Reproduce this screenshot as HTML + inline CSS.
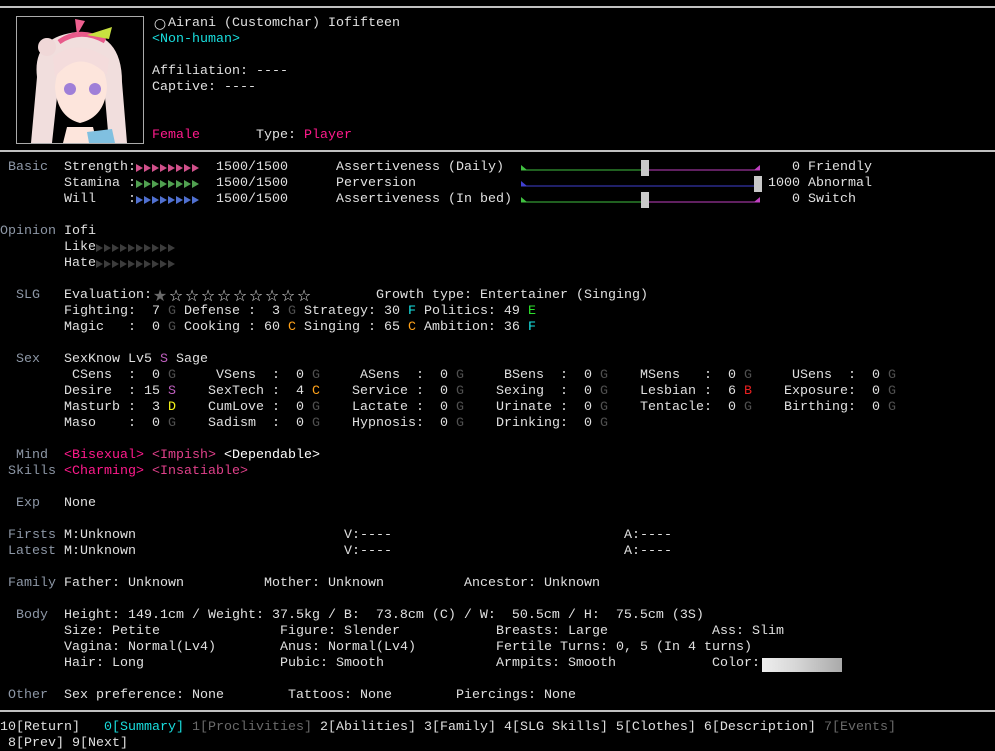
<!DOCTYPE html>
<html><head><meta charset="utf-8"><style>
html,body{margin:0;padding:0;background:#000;width:995px;height:751px;overflow:hidden}
body{position:relative;font-family:"Liberation Mono","Noto Sans CJK JP",monospace;font-size:13.33px;line-height:16px;color:#e0e0e0}
.t{position:absolute;white-space:pre;height:16px}
.l{color:#8d97a6}
.g{color:#505050}.F{color:#19e6e6}.E{color:#2de02d}.C{color:#ffa21a}.S{color:#c060c0}.D{color:#f5f51a}.B{color:#e82020}
.pk{color:#ff1a8c}.cy{color:#19dede}.mg{color:#e0408a}.gr{color:#6a6a6a}
.hr{position:absolute;left:0;width:995px;height:2px;background:#c0c0c0}
.st{display:inline-block;width:16px;text-align:center;font-size:16px;font-family:"DejaVu Sans",sans-serif;vertical-align:top;line-height:16px}
</style></head><body>
<div class="hr" style="top:6px"></div>
<div style="position:absolute;left:16px;top:16px;width:126px;height:126px;border:1px solid #aaa;background:#000;overflow:hidden">
<svg width="126" height="126" viewBox="0 0 126 126">
<path d="M20 60 Q15 20 60 15 Q105 15 105 65 L110 126 L92 126 L88 80 L40 80 L35 126 L14 126 Z" fill="#f1dedd"/>
<circle cx="30" cy="30" r="9" fill="#f0d8d8"/>
<path d="M38 70 Q40 40 63 38 Q88 40 90 70 Q88 100 63 106 Q40 100 38 70 Z" fill="#fde5dc"/>
<path d="M36 40 Q60 20 92 42 L90 58 Q62 30 38 60 Z" fill="#f4dcdc"/>
<ellipse cx="53" cy="72" rx="6" ry="6" fill="#9f7fd8"/><ellipse cx="78" cy="72" rx="6" ry="6" fill="#9f7fd8"/>
<path d="M42 25 Q63 10 88 24" stroke="#e85a8a" stroke-width="5" fill="none"/>
<path d="M60 18 L58 2 L68 4 Z" fill="#ee6090"/>
<path d="M70 18 L95 10 L92 22 Z" fill="#c8e040"/>
<path d="M50 110 L76 110 L80 126 L46 126 Z" fill="#fde5dc"/>
<path d="M70 115 L95 112 L98 126 L72 126 Z" fill="#80c0e0"/>
</svg></div>
<div class="t" style="left:152px;top:16px"><span class="st" style="font-size:14px">○</span>Airani (Customchar) Iofifteen</div>
<div class="t cy" style="left:152px;top:32px">&lt;Non-human&gt;</div>
<div class="t" style="left:152px;top:64px">Affiliation: ----</div>
<div class="t" style="left:152px;top:80px">Captive: ----</div>
<div class="t pk" style="left:152px;top:128px">Female</div>
<div class="t" style="left:256px;top:128px">Type: <span class="pk">Player</span></div>
<div class="hr" style="top:150px"></div>

<div class="t l" style="left:8px;top:160px">Basic</div>
<div class="t" style="left:64px;top:160px">Strength:</div>
<div class="t" style="left:64px;top:176px">Stamina :</div>
<div class="t" style="left:64px;top:192px">Will    :</div>
<svg style="position:absolute;left:136px;top:160px" width="70" height="48">
<g id="r1" fill="#d0508a"><path d="M0 4L7 8L0 12Z"/><path d="M8 4L15 8L8 12Z"/><path d="M16 4L23 8L16 12Z"/><path d="M24 4L31 8L24 12Z"/><path d="M32 4L39 8L32 12Z"/><path d="M40 4L47 8L40 12Z"/><path d="M48 4L55 8L48 12Z"/><path d="M56 4L63 8L56 12Z"/></g>
<g transform="translate(0,32)" fill="#5070d0"><path d="M0 4L7 8L0 12Z"/><path d="M8 4L15 8L8 12Z"/><path d="M16 4L23 8L16 12Z"/><path d="M24 4L31 8L24 12Z"/><path d="M32 4L39 8L32 12Z"/><path d="M40 4L47 8L40 12Z"/><path d="M48 4L55 8L48 12Z"/><path d="M56 4L63 8L56 12Z"/></g>
<g transform="translate(0,16)" fill="#50a050"><path d="M0 4L7 8L0 12Z"/><path d="M8 4L15 8L8 12Z"/><path d="M16 4L23 8L16 12Z"/><path d="M24 4L31 8L24 12Z"/><path d="M32 4L39 8L32 12Z"/><path d="M40 4L47 8L40 12Z"/><path d="M48 4L55 8L48 12Z"/><path d="M56 4L63 8L56 12Z"/></g>
</svg>
<div class="t" style="left:216px;top:160px">1500/1500</div>
<div class="t" style="left:216px;top:176px">1500/1500</div>
<div class="t" style="left:216px;top:192px">1500/1500</div>
<div class="t" style="left:336px;top:160px">Assertiveness (Daily)</div>
<div class="t" style="left:336px;top:176px">Perversion</div>
<div class="t" style="left:336px;top:192px">Assertiveness (In bed)</div>
<svg style="position:absolute;left:518px;top:158px" width="250" height="52">
<line x1="3" y1="12" x2="126" y2="12" stroke="#40c040"/><line x1="130" y1="12" x2="242" y2="12" stroke="#c040c0"/>
<path d="M3 7L3 12L9 12Z" fill="#40c040"/><path d="M242 7L242 12L236 12Z" fill="#c040c0"/>
<rect x="123" y="2" width="8" height="16" fill="#c8c8c8"/>
<line x1="3" y1="28" x2="240" y2="28" stroke="#4040d0"/><path d="M3 23L3 28L9 28Z" fill="#4040d0"/>
<rect x="236" y="18" width="8" height="16" fill="#c8c8c8"/>
<line x1="3" y1="44" x2="126" y2="44" stroke="#40c040"/><line x1="130" y1="44" x2="242" y2="44" stroke="#c040c0"/>
<path d="M3 39L3 44L9 44Z" fill="#40c040"/><path d="M242 39L242 44L236 44Z" fill="#c040c0"/>
<rect x="123" y="34" width="8" height="16" fill="#c8c8c8"/>
</svg>
<div class="t" style="left:792px;top:160px">0 Friendly</div>
<div class="t" style="left:768px;top:176px">1000 Abnormal</div>
<div class="t" style="left:792px;top:192px">0 Switch</div>

<div class="t l" style="left:0px;top:224px">Opinion</div>
<div class="t" style="left:64px;top:224px">Iofi</div>
<div class="t" style="left:64px;top:240px">Like</div>
<div class="t" style="left:64px;top:256px">Hate</div>
<svg style="position:absolute;left:96px;top:240px" width="84" height="32" fill="#3c3c3c">
<g id="o"><path d="M0 4L7 8L0 12Z"/><path d="M8 4L15 8L8 12Z"/><path d="M16 4L23 8L16 12Z"/><path d="M24 4L31 8L24 12Z"/><path d="M32 4L39 8L32 12Z"/><path d="M40 4L47 8L40 12Z"/><path d="M48 4L55 8L48 12Z"/><path d="M56 4L63 8L56 12Z"/><path d="M64 4L71 8L64 12Z"/><path d="M72 4L79 8L72 12Z"/></g>
<use href="#o" y="16"/></svg>

<div class="t l" style="left:16px;top:288px">SLG</div>
<div class="t" style="left:64px;top:288px">Evaluation:<span class="st" style="color:#6a6a6a">★</span><span class="st">☆</span><span class="st">☆</span><span class="st">☆</span><span class="st">☆</span><span class="st">☆</span><span class="st">☆</span><span class="st">☆</span><span class="st">☆</span><span class="st">☆</span></div>
<div class="t" style="left:376px;top:288px">Growth type: Entertainer (Singing)</div>
<div class="t" style="left:64px;top:304px">Fighting:  7 <span class="g">G</span> Defense :  3 <span class="g">G</span> Strategy: 30 <span class="F">F</span> Politics: 49 <span class="E">E</span></div>
<div class="t" style="left:64px;top:320px">Magic   :  0 <span class="g">G</span> Cooking : 60 <span class="C">C</span> Singing : 65 <span class="C">C</span> Ambition: 36 <span class="F">F</span></div>

<div class="t l" style="left:16px;top:352px">Sex</div>
<div class="t" style="left:64px;top:352px">SexKnow Lv5 <span class="S">S</span> Sage</div>
<div class="t" style="left:64px;top:368px"> CSens  :  0 <span class="g">G</span></div>
<div class="t" style="left:64px;top:384px">Desire  : 15 <span class="S">S</span></div>
<div class="t" style="left:64px;top:400px">Masturb :  3 <span class="D">D</span></div>
<div class="t" style="left:64px;top:416px">Maso    :  0 <span class="g">G</span></div>
<div class="t" style="left:208px;top:368px"> VSens  :  0 <span class="g">G</span></div>
<div class="t" style="left:208px;top:384px">SexTech :  4 <span class="C">C</span></div>
<div class="t" style="left:208px;top:400px">CumLove :  0 <span class="g">G</span></div>
<div class="t" style="left:208px;top:416px">Sadism  :  0 <span class="g">G</span></div>
<div class="t" style="left:352px;top:368px"> ASens  :  0 <span class="g">G</span></div>
<div class="t" style="left:352px;top:384px">Service :  0 <span class="g">G</span></div>
<div class="t" style="left:352px;top:400px">Lactate :  0 <span class="g">G</span></div>
<div class="t" style="left:352px;top:416px">Hypnosis:  0 <span class="g">G</span></div>
<div class="t" style="left:496px;top:368px"> BSens  :  0 <span class="g">G</span></div>
<div class="t" style="left:496px;top:384px">Sexing  :  0 <span class="g">G</span></div>
<div class="t" style="left:496px;top:400px">Urinate :  0 <span class="g">G</span></div>
<div class="t" style="left:496px;top:416px">Drinking:  0 <span class="g">G</span></div>
<div class="t" style="left:640px;top:368px">MSens   :  0 <span class="g">G</span></div>
<div class="t" style="left:640px;top:384px">Lesbian :  6 <span class="B">B</span></div>
<div class="t" style="left:640px;top:400px">Tentacle:  0 <span class="g">G</span></div>
<div class="t" style="left:784px;top:368px"> USens  :  0 <span class="g">G</span></div>
<div class="t" style="left:784px;top:384px">Exposure:  0 <span class="g">G</span></div>
<div class="t" style="left:784px;top:400px">Birthing:  0 <span class="g">G</span></div>

<div class="t l" style="left:16px;top:448px">Mind</div>
<div class="t l" style="left:8px;top:464px">Skills</div>
<div class="t pk" style="left:64px;top:448px">&lt;Bisexual&gt;</div>
<div class="t mg" style="left:152px;top:448px">&lt;Impish&gt;</div>
<div class="t" style="left:224px;top:448px;color:#fff">&lt;Dependable&gt;</div>
<div class="t pk" style="left:64px;top:464px">&lt;Charming&gt;</div>
<div class="t mg" style="left:152px;top:464px">&lt;Insatiable&gt;</div>

<div class="t l" style="left:16px;top:496px">Exp</div>
<div class="t" style="left:64px;top:496px">None</div>

<div class="t l" style="left:8px;top:528px">Firsts</div>
<div class="t l" style="left:8px;top:544px">Latest</div>
<div class="t" style="left:64px;top:528px">M:Unknown</div>
<div class="t" style="left:64px;top:544px">M:Unknown</div>
<div class="t" style="left:344px;top:528px">V:----</div>
<div class="t" style="left:344px;top:544px">V:----</div>
<div class="t" style="left:624px;top:528px">A:----</div>
<div class="t" style="left:624px;top:544px">A:----</div>

<div class="t l" style="left:8px;top:576px">Family</div>
<div class="t" style="left:64px;top:576px">Father: Unknown</div>
<div class="t" style="left:264px;top:576px">Mother: Unknown</div>
<div class="t" style="left:464px;top:576px">Ancestor: Unknown</div>

<div class="t l" style="left:16px;top:608px">Body</div>
<div class="t" style="left:64px;top:608px">Height: 149.1cm / Weight: 37.5kg / B:  73.8cm (C) / W:  50.5cm / H:  75.5cm (3S)</div>
<div class="t" style="left:64px;top:624px">Size: Petite</div>
<div class="t" style="left:280px;top:624px">Figure: Slender</div>
<div class="t" style="left:496px;top:624px">Breasts: Large</div>
<div class="t" style="left:712px;top:624px">Ass: Slim</div>
<div class="t" style="left:64px;top:640px">Vagina: Normal(Lv4)</div>
<div class="t" style="left:280px;top:640px">Anus: Normal(Lv4)</div>
<div class="t" style="left:496px;top:640px">Fertile Turns: 0, 5 (In 4 turns)</div>
<div class="t" style="left:64px;top:656px">Hair: Long</div>
<div class="t" style="left:280px;top:656px">Pubic: Smooth</div>
<div class="t" style="left:496px;top:656px">Armpits: Smooth</div>
<div class="t" style="left:712px;top:656px">Color:</div>
<div style="position:absolute;left:762px;top:658px;width:80px;height:14px;background:linear-gradient(90deg,#eee,#d8d8d8 40%,#aaa)"></div>

<div class="t l" style="left:8px;top:688px">Other</div>
<div class="t" style="left:64px;top:688px">Sex preference: None</div>
<div class="t" style="left:288px;top:688px">Tattoos: None</div>
<div class="t" style="left:456px;top:688px">Piercings: None</div>

<div class="hr" style="top:710px"></div>
<div class="t" style="left:0px;top:720px">10[Return]</div>
<div class="t cy" style="left:104px;top:720px">0[Summary]</div>
<div class="t gr" style="left:192px;top:720px">1[Proclivities]</div>
<div class="t" style="left:320px;top:720px">2[Abilities] 3[Family] 4[SLG Skills] 5[Clothes] 6[Description]</div>
<div class="t gr" style="left:824px;top:720px">7[Events]</div>
<div class="t" style="left:8px;top:736px">8[Prev] 9[Next]</div>
</body></html>
